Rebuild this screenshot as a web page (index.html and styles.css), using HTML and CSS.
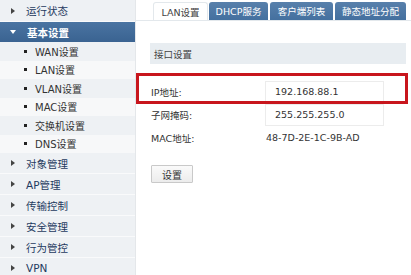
FILE: index.html
```html
<!DOCTYPE html>
<html>
<head>
<meta charset="utf-8">
<link rel="stylesheet" href="styles.css">
</head>
<body>
<div class="page">
  <aside class="side">
    <div class="menu"><span class="tri"></span>运行状态</div>
    <div class="menu active"><span class="tri down"></span>基本设置</div>
    <div class="sub"><span class="dot"></span>WAN设置</div>
    <div class="sub"><span class="dot"></span>LAN设置</div>
    <div class="sub"><span class="dot"></span>VLAN设置</div>
    <div class="sub"><span class="dot"></span>MAC设置</div>
    <div class="sub"><span class="dot"></span>交换机设置</div>
    <div class="sub"><span class="dot"></span>DNS设置</div>
    <div class="menu"><span class="tri"></span>对象管理</div>
    <div class="menu"><span class="tri"></span>AP管理</div>
    <div class="menu"><span class="tri"></span>传输控制</div>
    <div class="menu"><span class="tri"></span>安全管理</div>
    <div class="menu"><span class="tri"></span>行为管控</div>
    <div class="menu"><span class="tri"></span>VPN</div>
  </aside>
  <main class="main">
    <nav class="tabs">
      <div class="tab on">LAN设置</div>
      <div class="tab t2">DHCP服务</div>
      <div class="tab t3">客户端列表</div>
      <div class="tab t4">静态地址分配</div>
    </nav>
    <div class="section">接口设置</div>
    <div class="form">
      <div class="row"><span class="lbl">IP地址:</span><span class="val box">192.168.88.1</span></div>
      <div class="row"><span class="lbl">子网掩码:</span><span class="val box">255.255.255.0</span></div>
      <div class="row"><span class="lbl">MAC地址:</span><span class="val plain">48-7D-2E-1C-9B-AD</span></div>
    </div>
    <button class="btn">设置</button>
    <div class="mark"></div>
  </main>
</div>
</body>
</html>
```

FILE: styles.css
```css
html, body { margin: 0; padding: 0; background: #fff; }
body {
  font-family: "DejaVu Sans", "Noto Sans CJK SC", sans-serif;
  font-size: 10px;
  color: #333;
  width: 411px;
  height: 275px;
  overflow: hidden;
}
.page { display: flex; height: 275px; }
.side {
  width: 135px;
  flex: none;
  background: #eef1f4;
}
.menu {
  height: 21px;
  display: flex;
  align-items: center;
  padding-left: 10px;
  font-size: 10.5px;
  color: #1e3a5f;
  border-bottom: 1px solid #f9fafb;
  box-sizing: border-box;
}
.menu:first-child { height: 22px; }
.menu.active {
  height: 20px;
  background: linear-gradient(#4a74a2, #3a6391);
  color: #fff;
  font-weight: bold;
  border-bottom: none;
}
.tri {
  width: 0; height: 0;
  border-top: 3px solid transparent;
  border-bottom: 3px solid transparent;
  border-left: 4px solid #444;
  margin-right: 11px;
  margin-left: 1px;
}
.tri.down {
  border-left: 3px solid transparent;
  border-right: 3px solid transparent;
  border-top: 4px solid #fff;
  border-bottom: none;
  margin-right: 11px;
  margin-left: 0;
}
.sub {
  height: 18.5px;
  display: flex;
  align-items: center;
  padding-left: 24px;
  font-size: 10px;
  color: #333;
  background: #f7f8f9;
}
.sub:nth-child(odd) { background: #eef1f4; }
.dot {
  width: 3px; height: 3px;
  background: #222;
  margin-right: 8px;
}
.main {
  flex: 1;
  position: relative;
  border-left: 1px solid #e4e7ea;
}
.tabs {
  display: flex;
  gap: 1px;
  padding: 2px 0 0 17px;
  height: 18px;
  border-bottom: 1px solid #e3e8ec;
}
.tab {
  height: 18px;
  display: flex;
  align-items: center;
  justify-content: center;
  font-size: 9.5px;
  color: #fff;
  background: linear-gradient(#5880ab, #44709f);
  border-radius: 3px 3px 0 0;
}
.tab.on { width: 55px; background: #fff; color: #444; border: 1px solid #e3e8ec; border-bottom: none; box-sizing: border-box; }
.tab.t2 { width: 59px; }
.tab.t3 { width: 63px; margin-left: 1px; }
.tab.t4 { width: 71px; margin-left: 1px; }
.section {
  margin: 22px 5px 0 14px;
  height: 21px;
  background: #e8edf1;
  display: flex;
  align-items: center;
  padding-left: 4px;
  font-size: 9.5px;
  color: #444;
}
.form { margin-top: 16px; padding-left: 15px; }
.row { display: flex; align-items: center; height: 23px; }
.lbl { width: 114px; font-size: 9.5px; color: #333; }
.val { font-size: 9.5px; color: #333; }
.box {
  width: 119px;
  height: 22px;
  box-sizing: border-box;
  border: 1px solid #ececec;
  display: flex;
  align-items: center;
  padding-left: 9px;
}
.plain { padding-left: 1px; }
.btn {
  display: block;
  margin: 16px 0 0 15px;
  width: 42px;
  height: 18px;
  padding: 0;
  font-family: "Noto Sans CJK SC", sans-serif;
  font-size: 10px;
  color: #333;
  background: linear-gradient(#fafafa, #ececec);
  border: 1px solid #c9c9c9;
  border-radius: 1px;
}
.mark {
  position: absolute;
  left: 0;
  top: 73px;
  width: 272px;
  height: 31px;
  box-sizing: border-box;
  border: 3px solid #c8161d;
}
```
